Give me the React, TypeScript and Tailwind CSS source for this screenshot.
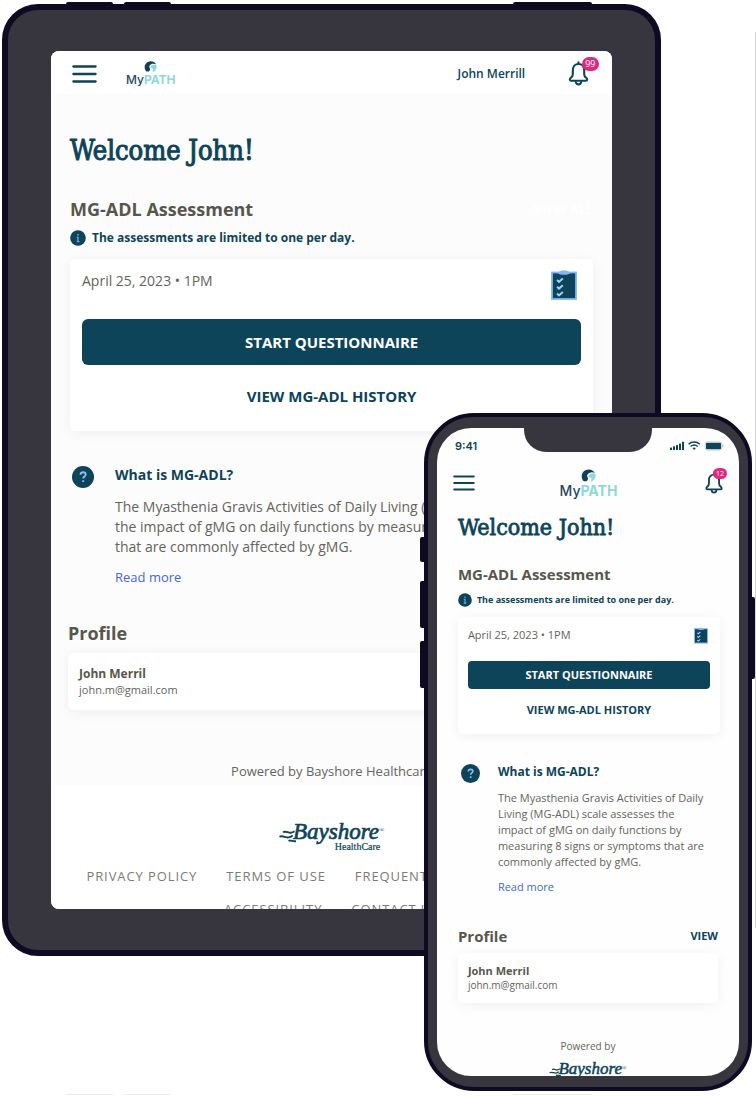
import React from "react";

const INFO = "The assessments are limited to one per day.";
const ABOUT =
  "The Myasthenia Gravis Activities of Daily Living (MG-ADL) scale assesses the impact of gMG on daily functions by measuring 8 signs or symptoms that are commonly affected by gMG.";
const LINKS = ["PRIVACY POLICY", "TERMS OF USE", "FREQUENTLY ASKED QUESTIONS", "ACCESSIBILITY", "CONTACT US"];

type Sized = { className?: string };

function MenuIcon({ className }: Sized) {
  return (
    <svg viewBox="0 0 25 18" className={className} fill="none" stroke="#0d4459" strokeWidth="2.3" strokeLinecap="round" aria-hidden="true">
      <path d="M1.4 1.5h22.2M1.4 9h22.2M1.4 16.5h22.2" />
    </svg>
  );
}

function BellIcon({ className }: Sized) {
  return (
    <svg viewBox="0 0 20 25" className={className} fill="none" stroke="#0d4459" strokeWidth="2.1" strokeLinejoin="round" strokeLinecap="round" aria-hidden="true">
      <path d="M10 1.2v1.6M10 3C6.600 3 4.300 5.700 4.300 9.200v4c0 1.600-.7 2.500-2 3.600-1.200 1.100-1.500 2.800.2 3h15c1.700-.2 1.400-1.900.2-3-1.300-1.100-2-2-2-3.600v-4C15.700 5.700 13.400 3 10 3Z" />
      <path d="M7.200 20.600c.3 1.900 1.300 2.800 2.800 2.800s2.500-.9 2.800-2.800" />
    </svg>
  );
}

function Swirl({ className }: Sized) {
  return (
    <svg viewBox="0 0 24 22" className={className} aria-hidden="true">
      <path d="M3.500 18.500C-.8 12.500 1 4.600 7 1.700 12.500-.9 20 .7 22.400 6.600c-2.600-1.800-6-2-9-.6-3.300 1.500-4.600 4.300-2.600 7.700.8 1.800.2 4.800-2.300 5.500-1.800.5-3.700.3-5-.7Z" fill="#123f57" />
      <path d="M22.900 7.600c1.600 5.800-2 12.200-8.700 13.600 2.700-2.200 3.500-5 1.900-7-1.200-1.500-3-1.600-4.200-1.700-.6-3 2-5.500 5.300-5.600 2-.1 4 .1 5.700.7Z" fill="#8ed8dc" />
    </svg>
  );
}

function MyPath({ large }: { large?: boolean }) {
  return (
    <div className="flex flex-col items-center font-['Inter',sans-serif]">
      <Swirl className={large ? "h-[14px] w-[15px]" : "h-[12px] w-[13px]"} />
      <span className={large ? "text-[14px] leading-[15px]" : "text-[12px] leading-[13px]"}>
        <span className="font-medium text-[#28495f]">My</span>
        <span className="font-bold text-[#8ed8dc]">PATH</span>
      </span>
    </div>
  );
}

function Bayshore({ small }: { small?: boolean }) {
  return (
    <div className="flex flex-col items-end font-['Liberation_Serif',serif] text-[#0d4459]">
      <div className="flex items-end">
        <svg viewBox="0 0 18 13" className={small ? "-mr-1 h-[9px] w-[13px]" : "-mr-1 h-[13px] w-[18px]"} fill="none" stroke="#0d4459" strokeWidth="1.9" aria-hidden="true">
          <path d="M4 2.300c3-1.800 5 .8 8 .4 1.500-.2 2.500-.8 3.500-1.500M.5 6.800c3-1.800 6 1 9 .6 1.800-.2 3-1 4.200-2M9.500 10.800c2.500-1 4 .9 7.500.4" />
        </svg>
        <span className={small ? "text-[17px] leading-[16px] italic [-webkit-text-stroke:0.5px_#0d4459]" : "text-[23px] leading-[22px] italic [-webkit-text-stroke:0.7px_#0d4459]"}>Bayshore</span>
        <span className={small ? "self-start pt-1 text-[6px] leading-[6px]" : "self-start pt-1.5 text-[7px] leading-[7px]"}>®</span>
      </div>
      <span className={small ? "pr-1 text-[7px] leading-[8px]" : "pr-1 text-[10px] leading-[8px] [-webkit-text-stroke:0.2px_#0d4459]"}>HealthCare</span>
    </div>
  );
}

function InfoIcon({ className }: Sized) {
  return (
    <svg viewBox="0 0 16 16" className={className} aria-hidden="true">
      <circle cx="8" cy="8" r="7.800" fill="#0d4459" />
      <path d="M8 4v1.700M6.700 7.300H8v4.200M6.600 11.600h2.900" stroke="#6ea9e0" strokeWidth="1.300" fill="none" />
    </svg>
  );
}

function HelpIcon({ className }: Sized) {
  return (
    <svg viewBox="0 0 22 22" className={className} aria-hidden="true">
      <circle cx="11" cy="11" r="11" fill="#0d4459" />
      <path d="M8.500 8.700c.1-1.600 1.200-2.400 2.600-2.400 1.500 0 2.600.9 2.600 2.200 0 1.900-2.500 1.900-2.500 4M11.200 14.200v1.900" stroke="#8dbcf5" strokeWidth="1.900" fill="none" />
    </svg>
  );
}

function ChecklistIcon({ className }: Sized) {
  return (
    <svg viewBox="0 0 26 30" className={className} aria-hidden="true">
      <rect x="1" y="2.500" width="24" height="26.500" fill="#0d4459" stroke="#82b6f2" strokeWidth="1.800" />
      <path d="M8 1.800C9.500.2 16.500.2 18 1.800l1 1.700c-2 1.700-10 1.700-12 0Z" fill="#82b6f2" />
      <path d="m6 10 2 1.800 3.800-3.300M6 16.800l2 1.800 3.800-3.300M6 23.600l2 1.800 3.800-3.300" stroke="#a9cdf7" strokeWidth="2" fill="none" />
    </svg>
  );
}

function StatusIcons() {
  return (
    <svg viewBox="0 0 54 10" className="h-[10px] w-[54px]" aria-hidden="true">
      <g fill="#0d4459">
        <rect x="0" y="6.500" width="2" height="2.500" rx=".5" />
        <rect x="3" y="5.300" width="2" height="3.700" rx=".5" />
        <rect x="6" y="4" width="2" height="5" rx=".5" />
        <rect x="9" y="2.500" width="2" height="6.500" rx=".5" />
        <rect x="12" y=".8" width="2" height="8.200" rx=".5" />
        <rect x="36" y="1.800" width="15" height="6.500" rx="1" />
      </g>
      <g stroke="#0d4459" strokeWidth="1.400" fill="none">
        <path d="M18.500 3.300c3.300-3 8-3 11.300 0M20.600 5.500c2.100-1.800 5-1.800 7.100 0" />
      </g>
      <path d="m24.150 9-1.700-1.900c1-.9 2.400-.9 3.400 0Z" fill="#0d4459" />
      <rect x="35.200" y=".9" width="16.600" height="8.200" rx="2" fill="none" stroke="#9fb5be" strokeWidth=".6" />
      <path d="M52.800 3.700v2.600" stroke="#9fb5be" />
    </svg>
  );
}

function TabletScreen() {
  return (
    <div className="flex h-full flex-col overflow-hidden rounded-lg bg-[#fcfcfc]">
      <header className="flex h-[43px] shrink-0 items-center bg-white pt-[2px] pr-[23px] pl-[21px]">
        <button aria-label="Menu"><MenuIcon className="h-[18px] w-[25px]" /></button>
        <div className="ml-[29px]"><MyPath /></div>
        <span className="ml-auto text-[12px] font-semibold text-[#0d4459]">John Merrill</span>
        <button aria-label="Notifications" className="relative ml-[43px]">
          <BellIcon className="h-[25px] w-[21px]" />
          <span className="absolute -top-1 left-[14px] rounded-full bg-[#e0287d] px-[3px] text-[9px] leading-[14px] text-white">99</span>
        </button>
      </header>

      <main className="shrink-0 pt-[36px] pr-[19px] pl-[19px]">
        <h1 className="font-['DejaVu_Serif_Condensed','DejaVu_Serif',serif] text-[27px] leading-[42px] text-[#0d4459] [-webkit-text-stroke:1px_#0d4459]">Welcome John!</h1>
        <div className="mt-[25px] flex items-center justify-between">
          <h2 className="text-[18px] leading-[24px] font-bold text-[#57564c]">MG-ADL Assessment</h2>
          <a href="#all" className="text-[13px] leading-[24px] font-bold text-white">VIEW ALL</a>
        </div>
        <p className="mt-[8px] flex items-center gap-[6px] text-[12px] leading-[18px] font-bold text-[#0d4459]">
          <InfoIcon className="size-4" />
          {INFO}
        </p>

        <section className="mt-[12px] flex flex-col rounded-[5px] bg-white px-[12px] pt-[11px] pb-[19px] shadow-[0_2px_14px_rgba(0,0,0,0.06)]">
          <div className="flex items-start justify-between">
            <span className="text-[14px] leading-[22px] text-[#65645b]">April 25, 2023 • 1PM</span>
            <ChecklistIcon className="mr-1 h-[30px] w-[26px]" />
          </div>
          <button className="mt-[19px] h-[46px] rounded-md bg-[#0d4459] text-[15px] font-bold text-white">START QUESTIONNAIRE</button>
          <button className="mt-[15px] h-[32px] text-[15px] font-bold text-[#0d4459]">VIEW MG-ADL HISTORY</button>
        </section>

        <section className="mt-[33px] flex gap-[21px] pl-[2px]">
          <HelpIcon className="mt-[2px] size-[22px] shrink-0" />
          <div>
            <h3 className="text-[14px] leading-[22px] font-bold text-[#0d4459]">What is MG-ADL?</h3>
            <p className="mt-[11px] text-[14px] leading-[20px] text-[#65645b]">{ABOUT}</p>
            <a href="#more" className="mt-[10px] block text-[13px] leading-[20px] font-medium text-[#4468d8]">Read more</a>
          </div>
        </section>

        <section className="mt-[34px] -ml-[2px]">
          <h2 className="text-[18px] leading-[24px] font-bold text-[#57564c]">Profile</h2>
          <div className="mt-[8px] rounded-[5px] bg-white px-[11px] pt-[12px] pb-[12px] shadow-[0_2px_14px_rgba(0,0,0,0.06)]">
            <p className="text-[12px] leading-[17px] font-bold text-[#57564c]">John Merril</p>
            <p className="text-[11px] leading-[16px] text-[#65645b]">john.m@gmail.com</p>
          </div>
        </section>

        <p className="mt-[51px] pb-[4px] text-center text-[13px] leading-[20px] text-[#65645b]">Powered by Bayshore Healthcare</p>
      </main>

      <footer className="flex grow flex-col items-center bg-white pt-[36px]">
        <Bayshore />
        <nav className="mt-[15px] flex flex-wrap justify-center gap-x-[29px] gap-y-[13px] px-4">
          {LINKS.map((l) => (
            <a key={l} href="#footer" className="text-[13px] leading-[20px] font-medium tracking-[0.07em] text-[#7c7c74]">{l}</a>
          ))}
        </nav>
      </footer>
    </div>
  );
}

function PhoneScreen() {
  return (
    <div className="relative flex h-full flex-col overflow-hidden rounded-[34px] bg-[#fefefe]">
      <div className="absolute top-0 left-1/2 h-[24px] w-[128px] -translate-x-1/2 rounded-b-[22px] bg-[#37363f]" />
      <div className="flex h-[36px] shrink-0 items-center justify-between pr-[15px] pl-[18px]">
        <span className="font-['Inter',sans-serif] text-[11px] font-semibold text-[#0d4459]">9:41</span>
        <StatusIcons />
      </div>
      <header className="flex h-[38px] shrink-0 items-center justify-between pr-[16px] pl-[16px]">
        <button aria-label="Menu"><MenuIcon className="h-[16px] w-[22px]" /></button>
        <div className="pr-[3px]"><MyPath large /></div>
        <button aria-label="Notifications" className="relative">
          <BellIcon className="h-[22px] w-[18px]" />
          <span className="absolute -top-1 left-[8px] rounded-full bg-[#e0287d] px-[3px] text-[7px] leading-[11px] text-white">12</span>
        </button>
      </header>

      <main className="px-[21px] pt-[7px]">
        <h1 className="font-['DejaVu_Serif_Condensed','DejaVu_Serif',serif] text-[23px] leading-[36px] text-[#0d4459] [-webkit-text-stroke:0.8px_#0d4459]">Welcome John!</h1>
        <h2 className="mt-[19px] text-[15px] leading-[20px] font-bold text-[#57564c]">MG-ADL Assessment</h2>
        <p className="mt-[9px] flex items-center gap-[5px] text-[9px] leading-[14px] font-bold text-[#0d4459]">
          <InfoIcon className="size-[14px]" />
          {INFO}
        </p>
        <section className="mt-[10px] -mr-[2px] flex flex-col rounded-[5px] bg-white px-[10px] pt-[10px] pb-[12px] shadow-[0_2px_12px_rgba(0,0,0,0.06)]">
          <div className="flex items-start justify-between">
            <span className="text-[11px] leading-[16px] text-[#65645b]">April 25, 2023 • 1PM</span>
            <ChecklistIcon className="mr-[2px] h-[17px] w-[14px]" />
          </div>
          <button className="mt-[17px] h-[28px] rounded-[4px] bg-[#0d4459] text-[11px] font-bold text-white">START QUESTIONNAIRE</button>
          <button className="mt-[9px] h-[24px] text-[11px] font-bold text-[#0d4459]">VIEW MG-ADL HISTORY</button>
        </section>

        <section className="mt-[29px] flex gap-[18px] pr-[7px] pl-[3px]">
          <HelpIcon className="mt-[1px] size-[19px] shrink-0" />
          <div>
            <h3 className="text-[12px] leading-[18px] font-bold text-[#0d4459]">What is MG-ADL?</h3>
            <p className="mt-[9px] text-[11px] leading-[16px] text-[#65645b]">{ABOUT}</p>
            <a href="#more" className="mt-[9px] block text-[11px] leading-[16px] font-medium text-[#4468d8]">Read more</a>
          </div>
        </section>

        <section className="mt-[31px]">
          <div className="flex items-center justify-between">
            <h2 className="text-[15px] leading-[20px] font-bold text-[#57564c]">Profile</h2>
            <a href="#profile" className="text-[11px] font-bold text-[#0d4459]">VIEW</a>
          </div>
          <div className="mt-[7px] rounded-[5px] bg-white px-[10px] py-[10px] shadow-[0_2px_12px_rgba(0,0,0,0.06)]">
            <p className="text-[11px] leading-[15px] font-bold text-[#57564c]">John Merril</p>
            <p className="text-[10px] leading-[15px] text-[#65645b]">john.m@gmail.com</p>
          </div>
        </section>

        <footer className="mt-[36px] flex flex-col items-center">
          <p className="text-[10px] leading-[14px] text-[#65645b]">Powered by</p>
          <div className="mt-[8px]"><Bayshore small /></div>
        </footer>
      </main>
    </div>
  );
}

export default function App() {
  return (
    <div className="relative grid grid-cols-1 overflow-hidden bg-white font-['Open_Sans',sans-serif]">
      <div className="relative col-start-1 row-start-1 mt-[4px] ml-[2px] aspect-[659/952] w-[87.2%] self-start">
        <span className="absolute -top-[2px] left-[64px] h-2 w-[47px] rounded-t-xs bg-[#0d0a22]" />
        <span className="absolute -top-[2px] left-[122px] h-2 w-[47px] rounded-t-xs bg-[#0d0a22]" />
        <span className="absolute -top-[2px] right-[69px] h-2 w-[79px] rounded-t-xs bg-[#0d0a22]" />
        <div className="relative h-full rounded-[36px] border-6 border-[#0d0a22] bg-[#37363f] px-[43px] pt-[41px] pb-[41px]">
          <TabletScreen />
        </div>
      </div>

      <div className="relative col-start-1 row-start-1 mt-[413px] mr-[4px] mb-[6px] aspect-[328/678] w-[43.4%] self-start justify-self-end">
        <span className="absolute top-[124px] -left-[4px] h-[25px] w-3 rounded-l-xs bg-[#0d0a22]" />
        <span className="absolute top-[168px] -left-[4px] h-[47px] w-3 rounded-l-xs bg-[#0d0a22]" />
        <span className="absolute top-[228px] -left-[4px] h-[47px] w-3 rounded-l-xs bg-[#0d0a22]" />
        <span className="absolute top-[184px] -right-[3px] h-[82px] w-3 rounded-r-xs bg-[#0d0a22]" />
        <div className="relative h-full rounded-[50px] border-4 border-[#0d0a22] bg-[#37363f] px-[9px] pt-[11px] pb-[11px]">
          <PhoneScreen />
        </div>
      </div>

      <span className="absolute top-[32px] right-0 h-[896px] w-px bg-[#d4d4d4]" />
      <span className="absolute bottom-[2px] left-[66px] h-px w-[47px] bg-[#ececec]" />
      <span className="absolute bottom-[2px] left-[124px] h-px w-[46px] bg-[#ececec]" />
      <span className="absolute right-[164px] bottom-[2px] h-px w-[79px] bg-[#ececec]" />
    </div>
  );
}
